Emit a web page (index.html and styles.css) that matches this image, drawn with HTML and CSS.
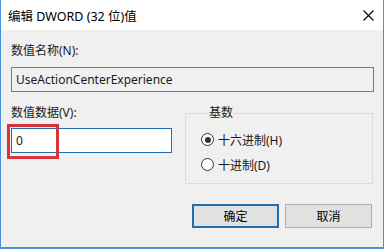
FILE: index.html
```html
<!DOCTYPE html>
<html>
<head>
  <meta charset="UTF-8">
  <title>编辑 DWORD (32 位)值</title>
  <link rel="stylesheet" href="styles.css">
</head>
<body>
  <div class="window">
    <div class="titlebar">
      <span class="title">编辑 DWORD (32 位)值</span>
      <svg class="close" width="11" height="11" viewBox="0 0 11 11">
        <path d="M0.5 0.5 L10.5 10.5 M10.5 0.5 L0.5 10.5" stroke="#000" stroke-width="1.1" fill="none"/>
      </svg>
    </div>

    <div class="content">
      <div class="label name-label">数值名称(N):</div>
      <div class="textbox readonly">UseActionCenterExperience</div>

      <div class="lower">
        <div class="data-col">
          <div class="label">数值数据(V):</div>
          <div class="data-wrap">
            <div class="textbox focused">0</div>
            <!-- 红色标注框 -->
            <div class="highlight"></div>
          </div>
        </div>

        <fieldset class="group">
          <legend>基数</legend>
          <div class="radio-row">
            <span class="radio checked"></span>
            <span>十六进制(H)</span>
          </div>
          <div class="radio-row">
            <span class="radio"></span>
            <span>十进制(D)</span>
          </div>
        </fieldset>
      </div>

      <div class="buttons">
        <button class="default">确定</button>
        <button>取消</button>
      </div>
    </div>
  </div>
</body>
</html>
```

FILE: styles.css
```css
html, body {
  margin: 0;
  padding: 0;
  background: #ffffff;
}
body {
  font-family: "Noto Sans", "Noto Sans CJK SC", sans-serif;
  font-size: 12px;
  color: #1a1a1a;
}
.window {
  width: 382px;
  height: 247px;
  border: 1px solid #4a8fdf;
  border-top: none;
  border-bottom-width: 2px;
  background: #f0f0f0;
  display: flex;
  flex-direction: column;
}
.titlebar {
  height: 30px;
  background: #ffffff;
  display: flex;
  align-items: center;
  justify-content: space-between;
  padding: 0 9px 0 7px;
  flex-shrink: 0;
}
.title {
  font-size: 12.5px;
  color: #000;
}
.close {
  margin-top: 1px;
}
.content {
  padding: 13px 9px 0 10px;
  display: flex;
  flex-direction: column;
}
.label {
  height: 16px;
  line-height: 16px;
}
.textbox {
  height: 23px;
  line-height: 23px;
  border: 1px solid #7a7a7a;
  padding: 0 4px;
  background: #ffffff;
}
.name-label {
  margin-bottom: 8px;
}
.readonly {
  background: #f0f0f0;
}
.lower {
  margin-top: 13px;
  display: grid;
  grid-template-columns: 161px 188px;
  column-gap: 13px;
}
.data-col .label {
  margin-bottom: 7px;
}
.data-wrap {
  position: relative;
}
.focused {
  border-color: #1f6fb0;
}
.highlight {
  position: absolute;
  left: -4px;
  top: -4px;
  width: 46px;
  height: 29px;
  border: 3px solid #d9343c;
}
.group {
  margin: 0;
  padding: 6px 0 0 15px;
  border: 1px solid #dcdcdc;
  box-sizing: border-box;
  height: 79px;
}
.group legend {
  padding: 0 1px;
  margin-left: 7px;
  line-height: 16px;
}
.radio-row {
  display: flex;
  align-items: center;
  gap: 4px;
  height: 25px;
}
.radio {
  width: 11px;
  height: 11px;
  border: 1px solid #333333;
  border-radius: 50%;
  background: #ffffff;
  position: relative;
}
.radio.checked::after {
  content: "";
  position: absolute;
  left: 2.5px;
  top: 2.5px;
  width: 6px;
  height: 6px;
  border-radius: 50%;
  background: #333333;
}
.buttons {
  margin-top: 20px;
  display: flex;
  justify-content: flex-end;
  gap: 6px;
  padding-right: 2px;
}
.buttons button {
  width: 87px;
  height: 24px;
  font-family: inherit;
  font-size: 12px;
  color: #000;
  background: #e1e1e1;
  border: 1px solid #adadad;
  padding: 0;
}
.buttons button.default {
  border: 2px solid #1f6fb0;
}
```
